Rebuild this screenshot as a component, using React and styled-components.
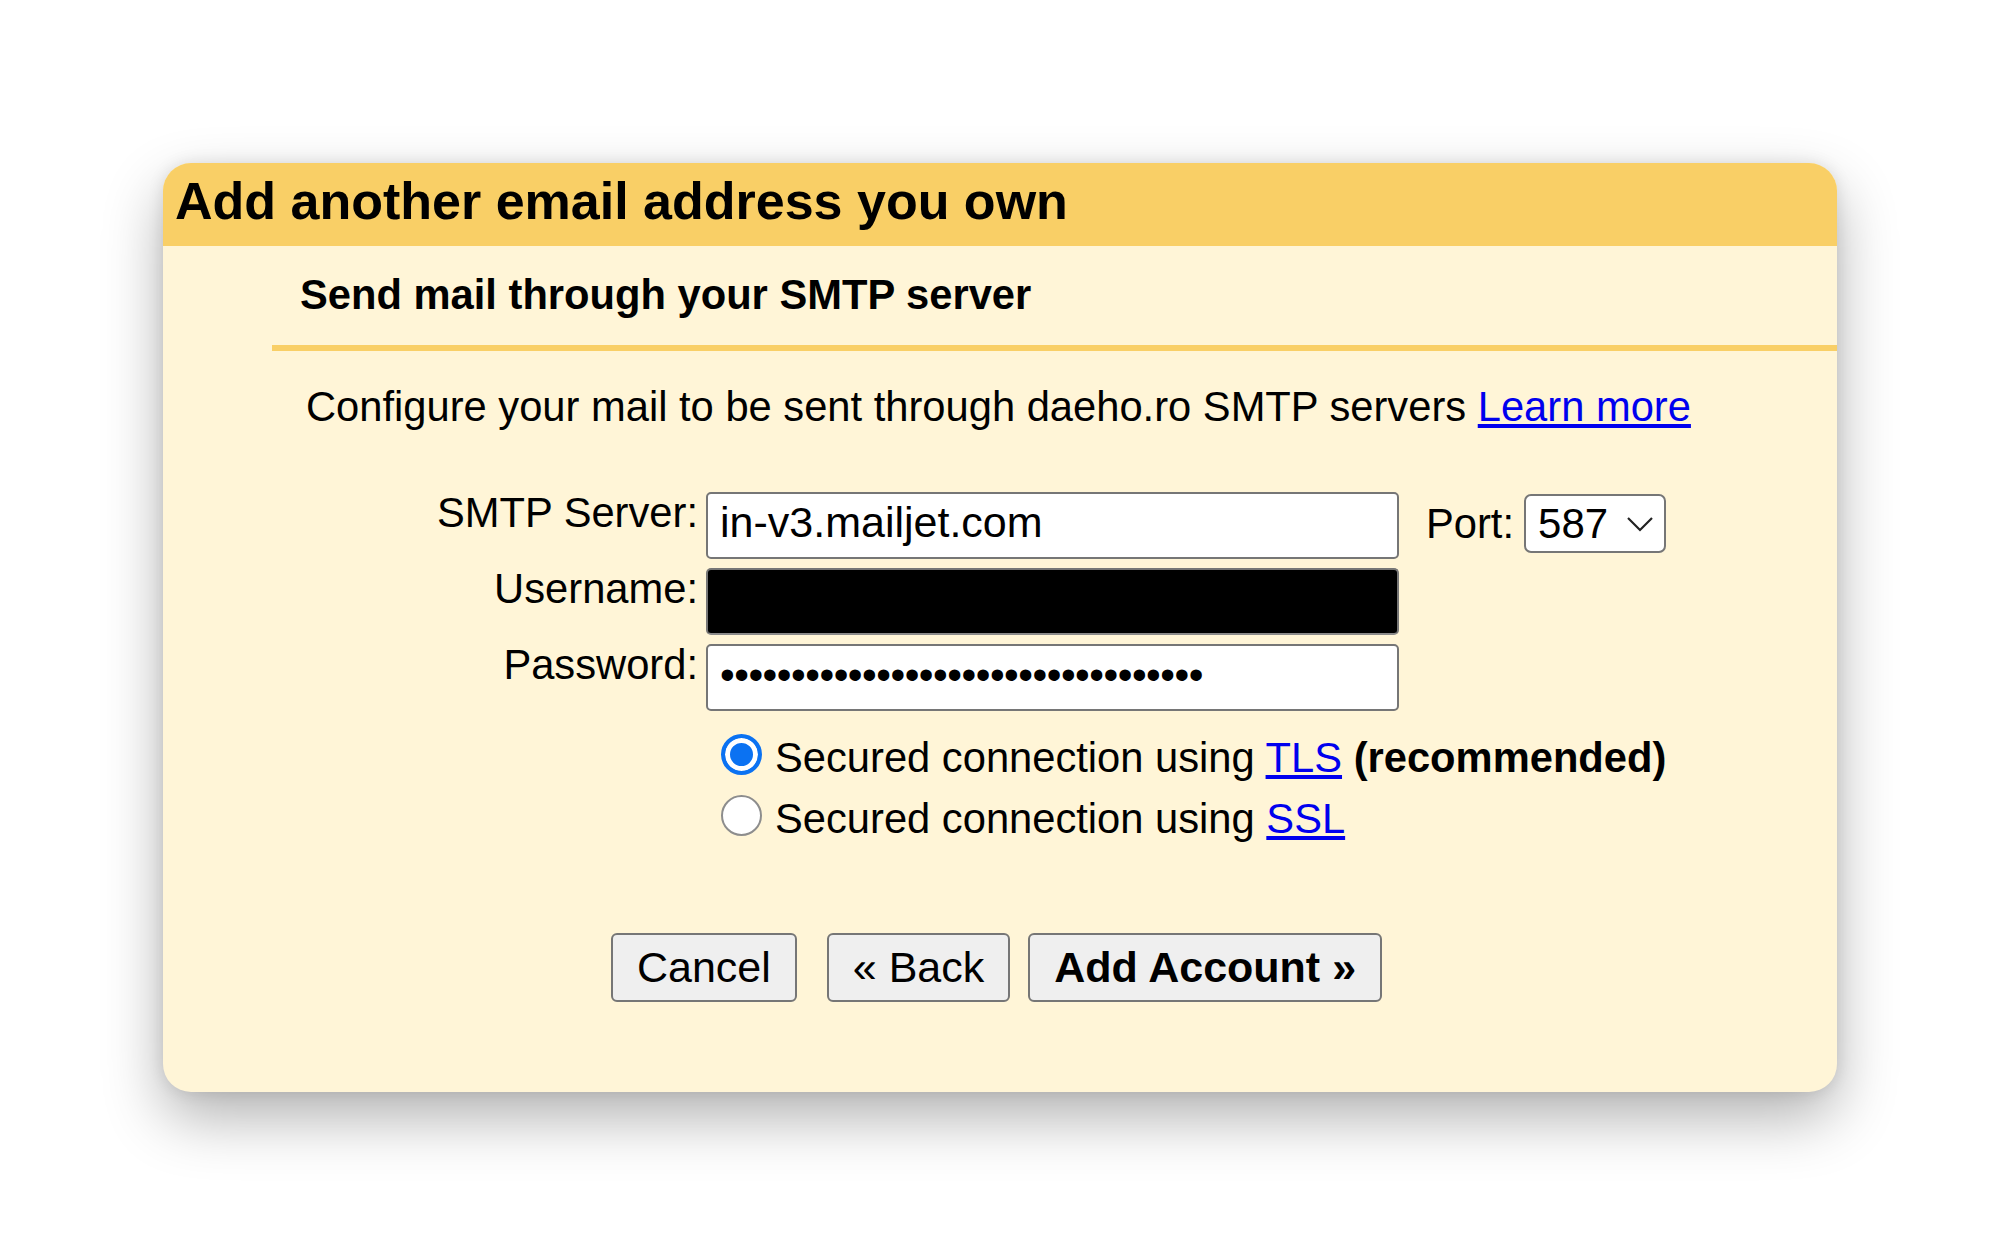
import styled, { createGlobalStyle } from 'styled-components';

const GlobalStyle = createGlobalStyle`
    body {
        margin: 0;
        background: #fff;
        font-family: "Liberation Sans", Arial, sans-serif;
        color: #000;
    }
`;

const Page = styled.div`
    padding: 163px 163px 163px;
`;

const Card = styled.div`
    background: #fff5d7;
    border-radius: 28px;
    overflow: hidden;
    padding-bottom: 90px;
    box-shadow: 0 26px 60px rgba(0, 0, 0, 0.3), 0 0 16px rgba(0, 0, 0, 0.1);
`;

const Header = styled.div`
    box-sizing: border-box;
    height: 83px;
    padding: 0 12px 7px;
    background: #f9cf66;
`;

const Title = styled.h1`
    margin: 0;
    font-size: 52px;
    line-height: 76px;
    font-weight: bold;
`;

const Section = styled.div`
    margin-left: 109px;
`;

const Subtitle = styled.h2`
    margin: 25px 0 0;
    padding-left: 28px;
    font-size: 41.7px;
    line-height: 48px;
    font-weight: bold;
`;

const Divider = styled.div`
    margin-top: 26px;
    height: 6px;
    background: #f9cf66;
`;

const Description = styled.p`
    margin: 32px 0 0;
    padding-left: 34px;
    font-size: 41.7px;
    line-height: 48px;
`;

const Link = styled.a`
    color: #0000ee;
    text-decoration: underline;
`;

const FormGrid = styled.div`
    margin-top: 61px;
    display: grid;
    grid-template-columns: 426px 693px auto;
    grid-template-rows: 67px 67px 67px auto;
    column-gap: 8px;
    row-gap: 9px;
`;

const FieldLabel = styled.label`
    text-align: right;
    font-size: 41.7px;
    line-height: 42px;
`;

const TextInput = styled.input`
    box-sizing: border-box;
    width: 100%;
    height: 67px;
    margin: 0;
    padding: 0 12px 6px;
    border: 2px solid #767676;
    border-bottom-color: ${(p) => (p.$blackout ? '#8a8a8a' : '#767676')};
    border-radius: 5px;
    background: ${(p) => (p.$blackout ? '#000' : '#fff')};
    font-family: "Liberation Sans", Arial, sans-serif;
    font-size: ${(p) => (p.type === 'password' ? '42px' : '43px')};
    color: #000;
    letter-spacing: ${(p) => (p.type === 'password' ? '-0.5px' : 'normal')};
    outline: none;
`;

const PortGroup = styled.div`
    display: flex;
    align-items: center;
    gap: 10px;
    margin: 2px 0 0 19px;
    align-self: start;
`;

const PortLabel = styled.label`
    font-size: 41.7px;
    line-height: 48px;
`;

const SelectWrap = styled.div`
    position: relative;
`;

const Select = styled.select`
    appearance: none;
    box-sizing: border-box;
    width: 142px;
    height: 59px;
    margin: 0;
    padding: 0 0 0 12px;
    border: 2px solid #767676;
    border-radius: 7px;
    background: #fff;
    font-family: "Liberation Sans", Arial, sans-serif;
    font-size: 42px;
    color: #000;
    outline: none;
`;

const Chevron = styled.svg`
    position: absolute;
    right: 12px;
    top: 22px;
    pointer-events: none;
`;

const RadioList = styled.div`
    grid-column: 2 / span 2;
    margin-top: 7px;
    display: flex;
    flex-direction: column;
`;

const RadioRow = styled.label`
    display: flex;
    align-items: flex-start;
    font-size: 41.7px;
    line-height: 61px;
    white-space: nowrap;
`;

const Radio = styled.input`
    appearance: none;
    box-sizing: border-box;
    flex: none;
    width: 41px;
    height: 41px;
    margin: 7px 13px 0 15px;
    border: 2px solid #8d8d8d;
    border-radius: 50%;
    background: #fff;

    &:checked {
        border: 4px solid #0b72f2;
        background: #0b72f2;
        box-shadow: inset 0 0 0 5px #fff;
    }
`;

const ButtonRow = styled.div`
    margin-top: 84px;
    padding-right: 7px;
    display: flex;
    justify-content: center;
    gap: 18px;
`;

const Button = styled.button`
    box-sizing: border-box;
    height: 69px;
    margin: 0 ${(p) => (p.$spaced ? '12px' : '0')} 0 0;
    padding: 0 24px;
    border: 2px solid #767676;
    border-radius: 6px;
    background: #efefef;
    font-family: "Liberation Sans", Arial, sans-serif;
    font-size: 43px;
    font-weight: ${(p) => (p.$primary ? 'bold' : 'normal')};
    color: #000;
`;

const App = () => {
    return (
        <Page>
            <GlobalStyle />
            <Card>
                <Header>
                    <Title>Add another email address you own</Title>
                </Header>
                <Section>
                    <Subtitle>Send mail through your SMTP server</Subtitle>
                    <Divider />
                    <Description>
                        Configure your mail to be sent through daeho.ro SMTP servers{' '}
                        <Link href="#">Learn more</Link>
                    </Description>
                    <FormGrid>
                        <FieldLabel>SMTP Server:</FieldLabel>
                        <TextInput defaultValue="in-v3.mailjet.com" />
                        <PortGroup>
                            <PortLabel>Port:</PortLabel>
                            <SelectWrap>
                                <Select defaultValue="587">
                                    <option value="587">587</option>
                                    <option value="465">465</option>
                                    <option value="25">25</option>
                                </Select>
                                <Chevron width="28" height="16" viewBox="0 0 28 16">
                                    <polyline
                                        points="2,2 14,14 26,2"
                                        fill="none"
                                        stroke="#222"
                                        strokeWidth="2.2"
                                    />
                                </Chevron>
                            </SelectWrap>
                        </PortGroup>

                        <FieldLabel>Username:</FieldLabel>
                        <TextInput $blackout />
                        <span />

                        <FieldLabel>Password:</FieldLabel>
                        <TextInput type="password" defaultValue="abcdefghijklmnopqrstuvwxyz12345678" />
                        <span />

                        <RadioList>
                            <RadioRow>
                                <Radio type="radio" name="security" defaultChecked />
                                <span>
                                    Secured connection using <Link href="#">TLS</Link>{' '}
                                    <b>(recommended)</b>
                                </span>
                            </RadioRow>
                            <RadioRow>
                                <Radio type="radio" name="security" />
                                <span>
                                    Secured connection using <Link href="#">SSL</Link>
                                </span>
                            </RadioRow>
                        </RadioList>
                    </FormGrid>
                </Section>
                <ButtonRow>
                    <Button $spaced>Cancel</Button>
                    <Button>« Back</Button>
                    <Button $primary>Add Account »</Button>
                </ButtonRow>
            </Card>
        </Page>
    );
};

export default App;
